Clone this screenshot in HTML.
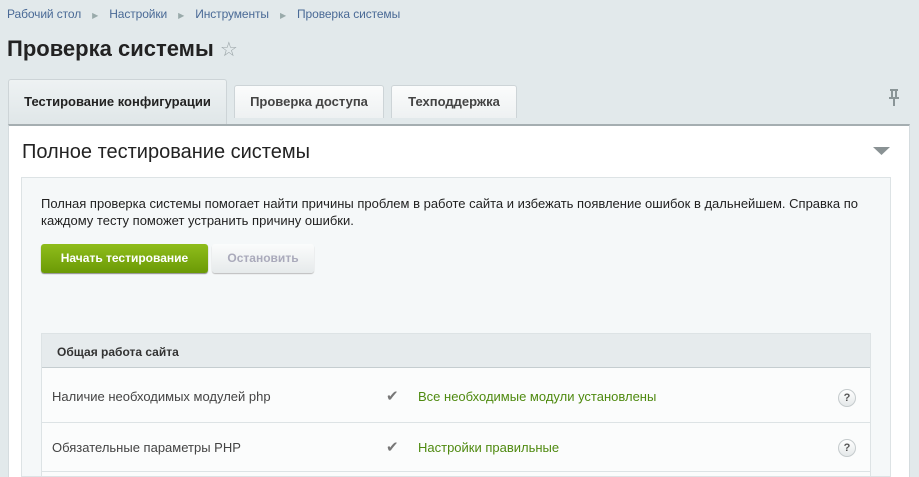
<!DOCTYPE html><html><head><meta charset="utf-8"><style>
*{margin:0;padding:0;box-sizing:border-box}
html,body{width:919px;height:477px;overflow:hidden}
body{background:#e2e9eb;font-family:"Liberation Sans",sans-serif;position:relative}
.a{position:absolute}
.bc{top:7px;left:7px;font-size:12px;color:#4a6a96;white-space:nowrap;letter-spacing:-0.1px}
.bc span.s{color:#9aa;margin:0 11px;font-size:8px}
h1{position:absolute;left:7px;top:36px;font-size:22px;font-weight:bold;color:#222}
.tab{position:absolute;top:85px;height:33px;border:1px solid #cdd4d7;border-bottom:none;border-radius:3px 3px 0 0;background:linear-gradient(#fbfcfc,#eef1f2);font-size:13px;font-weight:bold;color:#444;text-align:center;line-height:32px}
.panel{position:absolute;left:8px;top:124px;width:902px;height:353px;background:#fff;border-top:2px solid #a5aeb1;border-right:1px solid #d5dcdf;border-left:1px solid #d5dcdf}
.inner{position:absolute;left:21px;top:177px;width:870px;height:300px;background:#f5f8f9;border:1px solid #dde3e5}
.tbl{position:absolute;left:41px;top:333px;width:830px;height:144px;background:#fbfcfc;border:1px solid #dde3e5;overflow:hidden}
.row{position:absolute;left:0;width:828px;border-top:1px solid #dde3e5;font-size:13px;color:#444}
.q{position:absolute;right:14px;width:18px;height:18px;border-radius:50%;border:1px solid #c5cbcd;background:linear-gradient(#fff,#e4e8e9);font-size:11px;font-weight:bold;color:#555;text-align:center;line-height:16px}
.ok{position:absolute;left:376px;color:#4f8a10}
.ck{position:absolute;left:344px;font-size:15px;color:#777}
</style></head><body>
<div class="a bc">Рабочий стол<span class="s">▶</span>Настройки<span class="s">▶</span>Инструменты<span class="s">▶</span>Проверка системы</div>
<h1>Проверка системы <span style="font-size:20px;color:#99a3a6;font-weight:normal">☆</span></h1>
<div class="tab" style="left:8px;top:79px;width:219px;height:46px;line-height:44px;color:#222;background:linear-gradient(#eef2f3,#dfe6e8);border-color:#cdd4d7">Тестирование конфигурации</div>
<div class="tab" style="left:234px;width:150px">Проверка доступа</div>
<div class="tab" style="left:391px;width:126px">Техподдержка</div>
<svg class="a" style="left:887px;top:89px" width="14" height="18"><path d="M3 1h8M5 1v7M9 1v7M2 9h10M7 9v8" stroke="#8a9597" stroke-width="2" fill="none"/></svg>
<div class="panel"></div>
<div class="a" style="left:22px;top:141px;font-size:20px;color:#222">Полное тестирование системы</div>
<svg class="a" style="left:873px;top:147px" width="17" height="8"><path d="M0 0h17L8.5 8z" fill="#8a9294"/></svg>
<div class="inner"></div>
<div class="a" style="left:41px;top:195px;width:840px;font-size:13px;line-height:17px;color:#222">Полная проверка системы помогает найти причины проблем в работе сайта и избежать появление ошибок в дальнейшем. Справка по каждому тесту поможет устранить причину ошибки.</div>
<div class="a" style="left:41px;top:244px;width:167px;height:29px;border-radius:3px;background:linear-gradient(#8fbd1b,#6b9a06);box-shadow:0 1px 1px #888;color:#fff;font-size:12px;font-weight:bold;text-align:center;line-height:29px">Начать тестирование</div>
<div class="a" style="left:212px;top:244px;width:102px;height:29px;border-radius:3px;background:linear-gradient(#fbfcfc,#e6eaeb);box-shadow:0 1px 1px #bbb;color:#aab;font-size:12px;font-weight:bold;text-align:center;line-height:29px">Остановить</div>
<div class="tbl">
<div class="row" style="top:-1px;height:35px;background:#e6ebed;border-top:none;border-bottom:1px solid #c5cdd0;font-weight:bold;font-size:12px;line-height:38px;padding-left:15px;color:#333">Общая работа сайта</div>
<div class="row" style="top:35px;height:54px;line-height:56px;border-top:none"><span style="margin-left:10px">Наличие необходимых модулей php</span><span class="ck">✔</span><span class="ok">Все необходимые модули установлены</span><div class="q" style="top:20px">?</div></div>
<div class="row" style="top:88px;height:50px;line-height:50px"><span style="margin-left:10px">Обязательные параметры PHP</span><span class="ck">✔</span><span class="ok">Настройки правильные</span><div class="q" style="top:16px">?</div></div>
<div class="row" style="top:137px;height:20px"></div>
</div>
</body></html>
